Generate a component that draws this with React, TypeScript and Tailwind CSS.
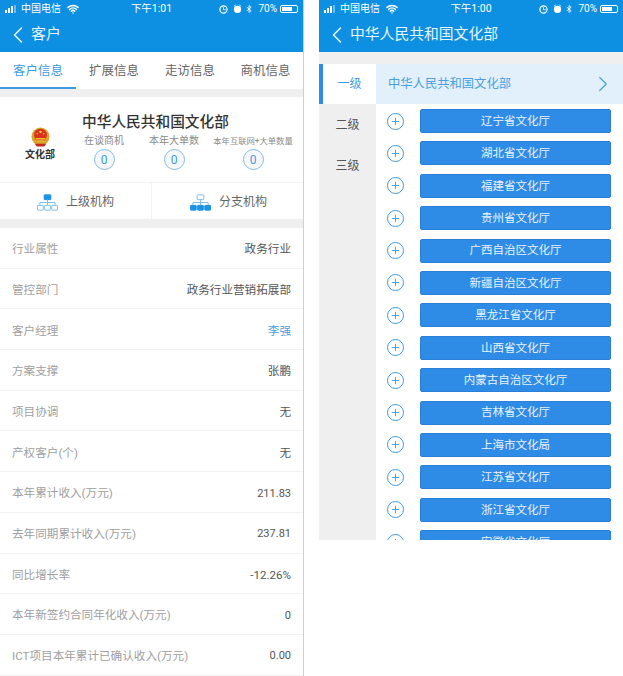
import React from "react";
import { ChevronLeft, ChevronRight, Plus, Wifi } from "lucide-react";

const FONT = "font-['Roboto','Noto_Sans_CJK_SC',sans-serif]";

function Bar({ time }: { time: string }) {
  return (
    <div className="flex h-[17px] shrink-0 items-center justify-between bg-[#0d8fe2] pl-[5px] pt-[1px] text-[10px] leading-none text-white">
      <div className="flex flex-1 items-center">
        <div className="flex items-end gap-[1px]">
          <span className="h-[3px] w-[2px] bg-white" />
          <span className="h-[5px] w-[2px] bg-white" />
          <span className="h-[7px] w-[2px] bg-white" />
          <span className="h-[8px] w-[2px] bg-white/40" />
        </div>
        <span className="ml-[5px]">中国电信</span>
        <Wifi size={12} strokeWidth={3} className="ml-[6px]" />
      </div>
      <span className="text-[10.5px]">{time}</span>
      <div className="flex flex-1 items-center justify-end pr-[5px]">
        <svg width="9" height="9" viewBox="0 0 10 10"><circle cx="5" cy="5" r="4" fill="none" stroke="white" strokeWidth="1.3" /><path d="M5 2.5V5.3H7.4" fill="none" stroke="white" /></svg>
        <svg width="9" height="10" viewBox="0 0 10 10" className="ml-[5px]"><circle cx="5" cy="5.5" r="4" fill="white" /><path d="M1 2L3 .5M9 2L7 .5" stroke="white" /></svg>
        <svg width="6" height="10" viewBox="0 0 7 10" className="ml-[4px]"><path d="M1 2.8L6 7L3.5 9V1L6 3L1 7.2" fill="none" stroke="white" strokeWidth="1" /></svg>
        <span className="ml-[6px]">70%</span>
        <div className="ml-[3px] flex h-[8px] w-[18px] items-center rounded-[2px] border border-white p-[1px]">
          <div className="h-full w-[70%] bg-white" />
        </div>
      </div>
    </div>
  );
}

function Emblem() {
  return (
    <svg width="19" height="20" viewBox="0 0 20 20">
      <circle cx="10" cy="9.5" r="9.5" fill="#d9a32c" />
      <circle cx="10" cy="8" r="6.8" fill="#d8321c" />
      <path d="M5 11h10v1.5H5zM6.5 13.5h7V15h-7z" fill="#f2c230" />
      <path d="M4 17h12l-2 3H6z" fill="#c8281a" />
      <circle cx="10" cy="4.6" r="1.3" fill="#f7d34a" />
      <circle cx="6.5" cy="6.6" r=".7" fill="#f7d34a" />
      <circle cx="13.5" cy="6.6" r=".7" fill="#f7d34a" />
    </svg>
  );
}

function Stat({ label, small, width }: { label: string; small?: boolean; width: string }) {
  return (
    <div className={`flex flex-col items-center ${width}`}>
      <span className={`whitespace-nowrap leading-[14px] text-[#8a8a8a] ${small ? "text-[8.3px]" : "text-[10px]"}`}>{label}</span>
      <span className="mt-[1px] flex h-[21px] w-[21px] items-center justify-center rounded-full border border-[#7fbdea] bg-[#f7f7f7] text-[12px] text-[#3d9be3]">0</span>
    </div>
  );
}

function OrgIcon({ filledTop }: { filledTop: boolean }) {
  const strong = "#1a93e6";
  const light = "#7cbde9";
  const topFill = filledTop ? strong : "#fff";
  const topStroke = filledTop ? strong : light;
  const bottomFill = filledTop ? "#fff" : strong;
  const bottomStroke = filledTop ? light : strong;
  return (
    <svg width="21" height="17" viewBox="0 0 22 17">
      <rect x="7.5" y="0.5" width="7" height="5" rx=".5" fill={topFill} stroke={topStroke} />
      <path d="M11 5.5V8.5M3 11V8.5H19V11M11 8.5V11" fill="none" stroke={light} />
      {[0.5, 8, 15.5].map((x) => (
        <rect key={x} x={x} y="11.5" width="6" height="5" rx=".5" fill={bottomFill} stroke={bottomStroke} />
      ))}
    </svg>
  );
}

const rows: [string, string, string][] = [
  ["行业属性", "政务行业", "text-[#555] text-[11.6px]"],
  ["管控部门", "政务行业营销拓展部", "text-[#555] text-[11.6px]"],
  ["客户经理", "李强", "text-[#4a9fdf] text-[11.6px]"],
  ["方案支撑", "张鹏", "text-[#555] text-[11.6px]"],
  ["项目协调", "无", "text-[#555] text-[11.6px]"],
  ["产权客户(个)", "无", "text-[#555] text-[11.6px]"],
  ["本年累计收入(万元)", "211.83", "text-[#555] text-[11px]"],
  ["去年同期累计收入(万元)", "237.81", "text-[#555] text-[11px]"],
  ["同比增长率", "-12.26%", "text-[#555] text-[11.6px]"],
  ["本年新签约合同年化收入(万元)", "0", "text-[#555] text-[11px]"],
  ["ICT项目本年累计已确认收入(万元)", "0.00", "text-[#555] text-[11px]"],
];

const provinces = [
  "辽宁省文化厅", "湖北省文化厅", "福建省文化厅", "贵州省文化厅", "广西自治区文化厅",
  "新疆自治区文化厅", "黑龙江省文化厅", "山西省文化厅", "内蒙古自治区文化厅", "吉林省文化厅",
  "上海市文化局", "江苏省文化厅", "浙江省文化厅", "安徽省文化厅",
];

function LeftPhone() {
  return (
    <div className="flex h-[676px] w-[304px] shrink-0 flex-col overflow-hidden border-r border-[#cfcfcf] bg-white">
      <Bar time="下午1:01" />
      <div className="flex h-[35px] shrink-0 items-center bg-[#0d8fe2] pl-[4px] text-[15px] text-white/90">
        <ChevronLeft size={28} strokeWidth={1.3} className="-mr-[1px]" />
        <span>客户</span>
      </div>
      <div className="flex h-[37px] shrink-0 bg-white text-[12.5px] text-[#666]">
        <div className="flex w-[76px] items-center justify-center border-b-2 border-[#3d9be3] pt-[3px] text-[#3d9be3]">客户信息</div>
        <div className="flex w-[76px] items-center justify-center pb-[2px] pt-[3px]">扩展信息</div>
        <div className="flex w-[76px] items-center justify-center pb-[2px] pt-[3px]">走访信息</div>
        <div className="flex w-[75px] items-center justify-center pb-[2px] pt-[3px]">商机信息</div>
      </div>
      <div className="h-[8px] shrink-0 bg-[#efefef]" />
      <div className="flex h-[86px] shrink-0 items-start border-b border-[#f3f3f3]">
        <div className="flex w-[62px] shrink-0 flex-col items-center pl-[18px] pt-[30px]">
          <Emblem />
          <span className="mt-[2px] whitespace-nowrap text-[10px] font-bold leading-[12px] text-[#333]">文化部</span>
        </div>
        <div className="flex flex-1 flex-col pt-[14px]">
          <div className="pl-[20px] text-[14.7px] font-medium leading-[22px] text-[#333]">中华人民共和国文化部</div>
          <div className="mt-[1px] flex">
            <Stat label="在谈商机" width="w-[62px] ml-[11px]" />
            <Stat label="本年大单数" width="w-[62px] ml-[8px]" />
            <Stat label="本年互联网+大单数量" small width="w-[80px] ml-[8px]" />
          </div>
        </div>
      </div>
      <div className="flex h-[36px] shrink-0 text-[12px] text-[#666]">
        <div className="flex w-[152px] items-center justify-center gap-[8px] border-r border-[#f3f3f3] pt-[2px]">
          <OrgIcon filledTop />
          <span>上级机构</span>
        </div>
        <div className="flex flex-1 items-center justify-center gap-[8px] pl-[2px] pt-[2px]">
          <OrgIcon filledTop={false} />
          <span>分支机构</span>
        </div>
      </div>
      <div className="h-[9px] shrink-0 bg-[#efefef]" />
      <div className="flex flex-col">
        {rows.map(([label, value, valueClass]) => (
          <div key={label} className="flex h-[40.7px] shrink-0 items-center justify-between border-b border-[#f2f2f2] px-[12px] pt-[4px] text-[11.6px]">
            <span className="text-[#a0a0a0]">{label}</span>
            <span className={valueClass}>{value}</span>
          </div>
        ))}
      </div>
    </div>
  );
}

function RightPhone() {
  return (
    <div className="flex h-[540px] w-[304px] shrink-0 flex-col overflow-hidden bg-white">
      <Bar time="下午1:00" />
      <div className="flex h-[35px] shrink-0 items-center bg-[#0d8fe2] pl-[4px] text-[14.8px] text-white/90">
        <ChevronLeft size={28} strokeWidth={1.3} className="-mr-[1px]" />
        <span>中华人民共和国文化部</span>
      </div>
      <div className="h-[12px] shrink-0 bg-[#efefef]" />
      <div className="flex min-h-0 flex-1">
        <div className="flex w-[57px] shrink-0 flex-col bg-[#efefef] text-[12px] text-[#555]">
          <div className="flex h-[40px] items-center justify-center border-l-4 border-[#2e8be6] bg-white text-[#3d9be3]">一级</div>
          <div className="flex h-[41px] items-center justify-center">二级</div>
          <div className="flex h-[41px] items-center justify-center">三级</div>
        </div>
        <div className="min-w-0 flex-1">
          <div className="flex h-[40px] items-center justify-between bg-[#e1f0fa] pl-[12px] pr-[7px] text-[12.3px] text-[#4a9fdf]">
            <span className="pt-[1px]">中华人民共和国文化部</span>
            <ChevronRight size={26} strokeWidth={1.1} />
          </div>
          <div className="flex flex-col gap-[8.4px] pt-[5px]">
            {provinces.map((p) => (
              <div key={p} className="flex h-[24px] shrink-0 items-center">
                <span className="ml-[11px] flex h-[17px] w-[17px] shrink-0 items-center justify-center rounded-full border-[1.5px] border-[#3d9be3] text-[#3d9be3]">
                  <Plus size={11} strokeWidth={2} />
                </span>
                <div className="ml-[16px] flex h-[24px] w-[191px] shrink-0 items-center justify-center rounded-[2px] border border-[#2a80d6] bg-[#2e8be6] pt-[1px] text-[11.5px] text-white/90">
                  {p}
                </div>
              </div>
            ))}
          </div>
        </div>
      </div>
    </div>
  );
}

export default function App() {
  return (
    <div className={`flex h-[676px] w-[623px] items-start gap-[15px] overflow-hidden bg-white ${FONT}`}>
      <LeftPhone />
      <RightPhone />
    </div>
  );
}
